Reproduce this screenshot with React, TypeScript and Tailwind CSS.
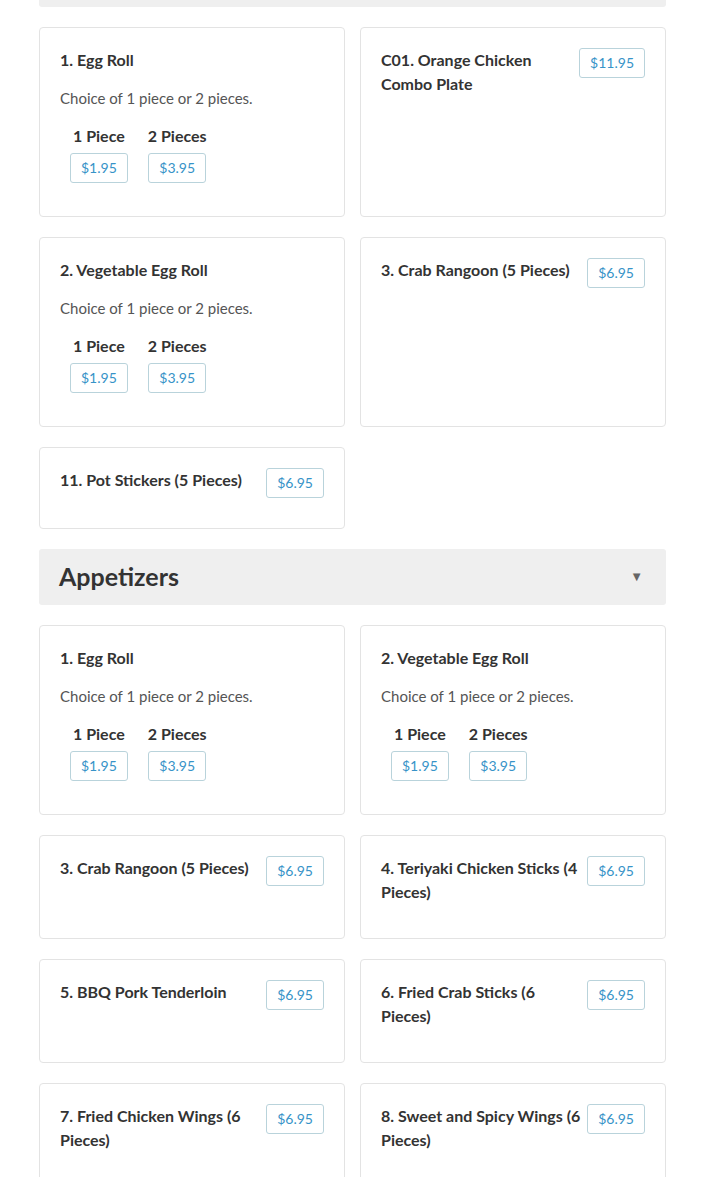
type Option = { label: string; price: string };
type Item = { name: string; desc?: string; price?: string; options?: Option[] };

const pieces: Option[] = [
  { label: "1 Piece", price: "$1.95" },
  { label: "2 Pieces", price: "$3.95" },
];

const firstSection: Item[] = [
  { name: "1. Egg Roll", desc: "Choice of 1 piece or 2 pieces.", options: pieces },
  { name: "C01. Orange Chicken Combo Plate", price: "$11.95" },
  { name: "2. Vegetable Egg Roll", desc: "Choice of 1 piece or 2 pieces.", options: pieces },
  { name: "3. Crab Rangoon (5 Pieces)", price: "$6.95" },
  { name: "11. Pot Stickers (5 Pieces)", price: "$6.95" },
];

const appetizers: Item[] = [
  { name: "1. Egg Roll", desc: "Choice of 1 piece or 2 pieces.", options: pieces },
  { name: "2. Vegetable Egg Roll", desc: "Choice of 1 piece or 2 pieces.", options: pieces },
  { name: "3. Crab Rangoon (5 Pieces)", price: "$6.95" },
  { name: "4. Teriyaki Chicken Sticks (4 Pieces)", price: "$6.95" },
  { name: "5. BBQ Pork Tenderloin", price: "$6.95" },
  { name: "6. Fried Crab Sticks (6 Pieces)", price: "$6.95" },
  { name: "7. Fried Chicken Wings (6 Pieces)", price: "$6.95" },
  { name: "8. Sweet and Spicy Wings (6 Pieces)", price: "$6.95" },
];

function PriceButton({ price }: { price: string }) {
  return (
    <button className="h-[30px] px-[10px] border border-[#b9d3db] rounded-[3px] bg-white text-[14px] leading-5 text-[#3793c8] shrink-0">
      {price}
    </button>
  );
}

function ItemCard({ item }: { item: Item }) {
  return (
    <div className="border border-[#e3e3e3] rounded-[4px] bg-white p-5">
      <div className="flex items-start gap-[5px]">
        <h3 className="flex-1 font-bold text-[16px] leading-6 text-[#333] mb-[14px]">{item.name}</h3>
        {item.price && (
          <div className="mb-[10px]">
            <PriceButton price={item.price} />
          </div>
        )}
      </div>
      {item.desc && <p className="text-[15px] leading-6 text-[#555] mb-[14px]">{item.desc}</p>}
      {item.options && (
        <div className="flex gap-5 pl-[10px] mb-[13px]">
          {item.options.map((o) => (
            <div key={o.label} className="flex flex-col items-center gap-[5px]">
              <span className="font-bold text-[16px] leading-6 text-[#333]">{o.label}</span>
              <PriceButton price={o.price} />
            </div>
          ))}
        </div>
      )}
    </div>
  );
}

function SectionHeader({ title }: { title: string }) {
  return (
    <div className="h-[56px] bg-[#efefef] rounded-[3px] flex items-center justify-between pl-5 pr-[23px]">
      <h2 className="font-bold text-[25px] text-[#333]">{title}</h2>
      <span className="text-[13px] text-[#666]">▼</span>
    </div>
  );
}

function Grid({ items }: { items: Item[] }) {
  return (
    <div className="grid grid-cols-2 gap-x-[15px] gap-y-5 my-5">
      {items.map((it) => (
        <ItemCard key={it.name} item={it} />
      ))}
    </div>
  );
}

export default function App() {
  return (
    <div className="min-h-screen bg-white overflow-hidden" style={{ fontFamily: "Lato, 'Open Sans', sans-serif" }}>
      <div className="px-[39px]">
        {/* previous section header, scrolled mostly out of view */}
        <div className="h-[7px] bg-[#efefef] rounded-b-[3px]" />
        <Grid items={firstSection} />
        <SectionHeader title="Appetizers" />
        <Grid items={appetizers} />
      </div>
    </div>
  );
}
